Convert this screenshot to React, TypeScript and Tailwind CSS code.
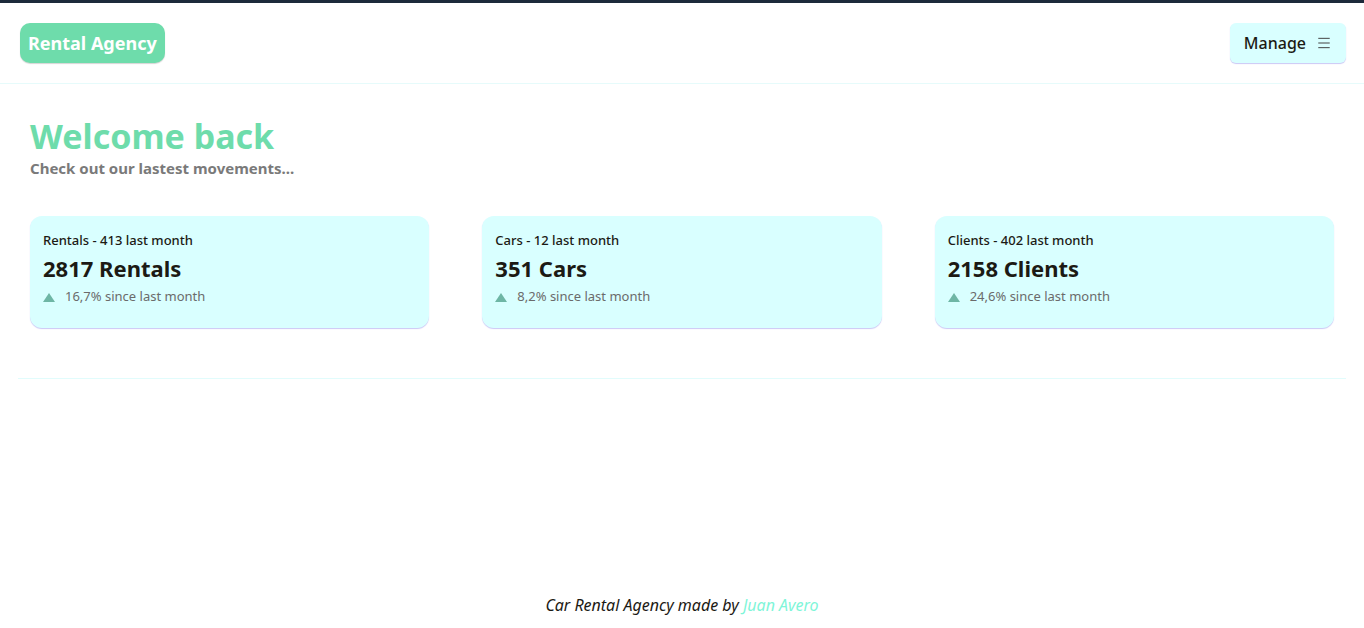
import { Menu } from "lucide-react";

type Stat = {
  label: string;
  last: number;
  total: number;
  growth: string;
};

const stats: Stat[] = [
  { label: "Rentals", last: 413, total: 2817, growth: "16,7%" },
  { label: "Cars", last: 12, total: 351, growth: "8,2%" },
  { label: "Clients", last: 402, total: 2158, growth: "24,6%" },
];

const StatCard = ({ stat }: { stat: Stat }) => (
  <div className="h-[112px] rounded-xl bg-[#d9ffff] px-[13px] pt-[15px] shadow-[0_1px_1px_#cbc8f5]">
    <p className="text-[13px] font-medium leading-[18px] text-[#1c1a14]">
      {stat.label} - {stat.last} last month
    </p>
    <h3 className="mt-[6px] text-[22px] font-bold leading-[26px] text-[#1c1a14]">
      {stat.total} {stat.label}
    </h3>
    <div className="mt-[6px] flex items-center gap-[10px] text-[13px] text-[#6b6b6b]">
      <svg width="12" height="9" viewBox="0 0 12 9" className="mt-[2px]">
        <polygon points="6,0 12,9 0,9" fill="#6eb6a5" />
      </svg>
      <span>{stat.growth} since last month</span>
    </div>
  </div>
);

export default function App() {
  return (
    <div className="flex min-h-[628px] flex-col bg-white font-['Noto_Sans',sans-serif]">
      <div className="h-[3px] bg-[#1c2a3b]" />
      <header className="flex h-[81px] items-center justify-between border-b border-[#e6fbfb] pl-5 pr-[18px]">
        <a className="flex h-[40px] items-center rounded-[10px] bg-[#6edcab] px-[8px] text-[18px] font-bold text-white shadow-[0_1px_1px_#d5d5d5]">
          Rental Agency
        </a>
        <button className="flex h-[40px] items-center gap-[10px] rounded-md bg-[#d9ffff] px-[14px] text-[16px] font-medium text-[#1c1a14] shadow-[0_1px_1px_#cbc8f5]">
          Manage
          <Menu size={16} strokeWidth={1.5} className="text-[#444]" />
        </button>
      </header>

      <main className="px-[30px] pt-[32px]">
        <h1 className="text-[34px] font-bold leading-[40px] text-[#6edcab]">
          Welcome back
        </h1>
        <p className="mt-[3px] text-[15px] font-bold leading-[18px] text-[#7a7a7a]">
          Check out our lastest movements...
        </p>

        <div className="mt-[39px] grid grid-cols-3 gap-[53px]">
          {stats.map((stat) => (
            <StatCard key={stat.label} stat={stat} />
          ))}
        </div>
      </main>

      <hr className="mx-[18px] mt-[50px] border-[#e1fcfc]" />

      <footer className="mt-auto pb-[11px] text-center text-[16px] italic text-[#1c1a14]">
        Car Rental Agency made by{" "}
        <a className="text-[#7ff5d8]">Juan Avero</a>
      </footer>
    </div>
  );
}
